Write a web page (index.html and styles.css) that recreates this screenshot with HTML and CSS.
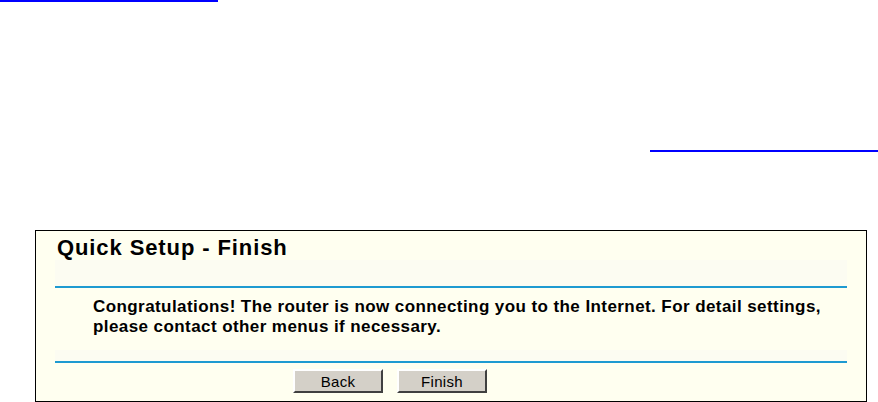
FILE: index.html
```html
<!DOCTYPE html>
<html>
<head>
<meta charset="utf-8">
<link rel="stylesheet" href="styles.css">
</head>
<body>
<div class="link-line top-line"></div>
<div class="link-line mid-line"></div>
<div class="panel">
  <h1 class="title">Quick Setup - Finish</h1>
  <div class="rule-band"></div>
  <div class="rule"></div>
  <p class="message">Congratulations! The router is now connecting you to the Internet. For detail settings, please contact other menus if necessary.</p>
  <div class="rule-band"></div>
  <div class="rule"></div>
  <div class="buttons">
    <button class="btn">Back</button>
    <button class="btn">Finish</button>
  </div>
</div>
</body>
</html>
```
FILE: styles.css
```css
html, body {
  margin: 0;
  padding: 0;
  background: #ffffff;
  font-family: "Liberation Sans", Arial, sans-serif;
}
.link-line {
  height: 2px;
  background: #0000ff;
}
.top-line {
  width: 218px;
}
.mid-line {
  margin-top: 148px;
  margin-left: 650px;
  width: 228px;
}
.panel {
  margin-top: 78px;
  margin-left: 35px;
  width: 832px;
  height: 172px;
  border: 1px solid #000;
  background: #fffff0;
  padding: 0 19px 0 19px;
  box-sizing: border-box;
  overflow: hidden;
}
.title {
  margin: 0;
  padding: 4px 0 0 2px;
  font-size: 22px;
  letter-spacing: 0.9px;
  font-weight: bold;
  color: #000;
  line-height: 25px;
}
.rule-band {
  height: 26px;
  background: #fcfcf2;
}
.rule {
  height: 2px;
  background: #1e9ad1;
}
.message {
  margin: 0;
  padding: 9px 12px 13px 38px;
  font-size: 17px;
  letter-spacing: 0.42px;
  font-weight: bold;
  line-height: 20px;
  color: #000;
}
.message + .rule-band {
  height: 11px;
}
.buttons {
  display: flex;
  gap: 14px;
  padding: 6px 0 0 238px;
}
.btn {
  width: 90px;
  height: 24px;
  background: #d4d0c8;
  border: 2px solid;
  border-color: #ffffff #404040 #404040 #ffffff;
  font-family: "Liberation Sans", Arial, sans-serif;
  font-size: 15px;
  letter-spacing: 0.3px;
  color: #000;
  padding: 0;
}
```
